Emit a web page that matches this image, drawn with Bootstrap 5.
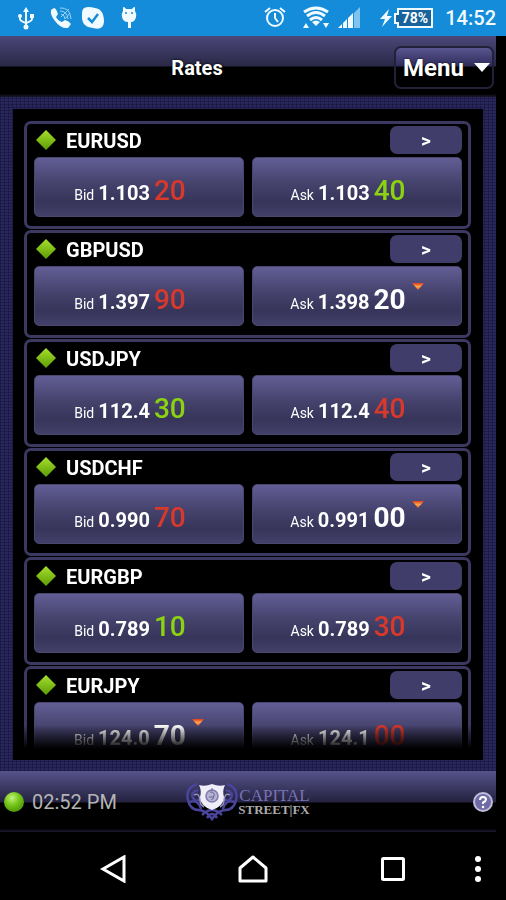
<!DOCTYPE html>
<html lang="en">
<head>
<meta charset="utf-8">
<meta name="viewport" content="width=device-width, initial-scale=1">
<title>Rates</title>
<link href="https://cdn.jsdelivr.net/npm/bootstrap@5.3.0/dist/css/bootstrap.min.css" rel="stylesheet">
<style>
body{background:#000;color:#fff;font-family:Roboto,"Liberation Sans",sans-serif;height:100vh;overflow:hidden}
svg{display:block;flex:none}
.status{background:#148cd9;height:36px;padding:0 10px 0 18px;color:#f1faff;font-size:20px;font-weight:500}
.battery-text{font:700 14px Roboto,sans-serif}
.app-shell{margin-right:10px;min-height:0}
.topbar{height:61px;padding:10px 2px 8px 0;background:linear-gradient(#4b4779 0,#2a2846 30px,#000 31px,#000 58px,#15141f 60px)}
.topbar h1{font-size:20px;font-weight:700;line-height:24px;text-shadow:0 0 3px #000}
.menu-btn{width:100px;border:2px solid #22213a;border-radius:7px;font-size:24px;font-weight:700;line-height:26px;color:#fff;padding:0 2px 0 7px;background:linear-gradient(#595590,#2f2c5c 18px,#000 19px);text-shadow:0 0 2px #000}
.woven{padding:12px 13px 11px;min-height:0;background:repeating-linear-gradient(0deg,#100e3666 0 1px,transparent 1px 3px),repeating-linear-gradient(90deg,#100e3666 0 1px,transparent 1px 4px),#29265a}
.well{background:#000;padding:12px 12px 11px 11px;min-height:0}
.rates{overflow:hidden;min-height:0;-webkit-mask-image:linear-gradient(#000 calc(100% - 24px),transparent);mask-image:linear-gradient(#000 calc(100% - 24px),transparent)}
.rate{border:3px solid #3b3862;border-radius:7px;height:108px;margin-bottom:1px;padding:2px 6px 0 7px;flex:none}
.rate h2{font-size:20px;font-weight:700;line-height:26px;padding:2px 0 0 10px}
.gem-icon{margin-left:2px}
.more-btn{width:72px;height:28px;border:0;border-radius:7px;background:#403d6b;color:#fff;font-size:19px;font-weight:700;line-height:30px;padding:0}
.quotes{margin-top:3px}
.price{height:60px;border:1px solid #494670;border-radius:5px;background:linear-gradient(#625e95,#44416b 45%,#38355b 75%,#423f69);color:#fff;padding:12px 0 0;white-space:nowrap}
.side{font-size:14px}
.base{font-size:20px;font-weight:700}
.pips{font-size:28px;font-weight:500;line-height:42px}
.up{color:#8bd211}.down{color:#d8392a}
.flat{font-weight:700}
.tick{width:12px;height:8px;margin-left:6px;align-self:flex-start;margin-top:3px}
.footbar{height:61px;display:grid;grid-template-columns:1fr auto 1fr;background:linear-gradient(#56528b 0,#24223f 31px,#000 32px,#000 58px,#16152a 60px)}
.clock{font-size:20px;color:#b4b4b4}
.brand{font-family:"Liberation Serif",serif;text-decoration:none}
.brand-top{font-size:17px;line-height:16px;color:#7772b4}
.brand-low{font-size:13px;line-height:12px;font-weight:700;color:#aaa}
.help-btn{border:0;background:none;padding:0 3px 0 0}
.sysnav{height:68px;display:grid;grid-template-columns:43px 1fr 1fr 1fr 29px;padding-right:14px;padding-top:6px}
.sysnav button{border:0;background:none;padding:0;display:flex;align-items:center;justify-content:center}
</style>
</head>
<body class="d-flex flex-column">
<svg width="0" height="0" class="position-absolute" aria-hidden="true">
<defs>
<linearGradient id="gem" x1="0" y1="0" x2="0" y2="1"><stop stop-color="#a6e02c"/><stop offset="1" stop-color="#5c9c06"/></linearGradient>
<radialGradient id="ball" cx=".4" cy=".3" r=".7"><stop stop-color="#c3f279"/><stop offset=".5" stop-color="#77c81b"/><stop offset="1" stop-color="#4d990a"/></radialGradient>
<linearGradient id="ember" x1="0" y1="0" x2="0" y2="1"><stop stop-color="#e03a1c"/><stop offset=".5" stop-color="#ffa44d"/><stop offset="1" stop-color="#e8561f"/></linearGradient>
<symbol id="diamond" viewBox="0 0 20 20"><path d="M10 0 20 10 10 20 0 10Z" fill="url(#gem)"/></symbol>
<symbol id="drop" viewBox="0 0 12 8"><path d="M0 1h12L6 8Z" fill="url(#ember)"/></symbol>
</defs>
</svg>

<div class="status d-flex align-items-center justify-content-between flex-shrink-0">
  <div class="d-flex align-items-center">
    <svg width="16" height="24" viewBox="0 0 16 24" fill="none" stroke="#f1faff" stroke-width="2"><path d="M8 4v17M2 9v4q0 2 6 4M14 9v4q0 2-6 4"/><g fill="#f1faff" stroke="none"><path d="m8 1 3 5H5Z"/><circle cx="8" cy="21" r="2.5"/><circle cx="2" cy="10" r="2"/><path d="M12 8h4v4h-4z"/></g></svg>
    <svg class="ms-3" width="23" height="24" viewBox="0 0 23 24" fill="#f1faff"><path d="m1 4 3-2q2 0 4 6l-2 3q2 4 6 5l3-2q4 1 6 4l-3 4Q11 23 5 15 0 9 1 4Z"/><path d="M10 2q10-1 11 11M10 5q7 0 8 8M11 8q4 1 4 5M11 11 19 3M15 13l5-6" fill="none" stroke="#9ad2f5" stroke-width="1"/></svg>
    <svg class="ms-2" width="24" height="24" viewBox="0 0 24 24"><path d="M7 1Q1 1 1 7v2q-1 12 11 13 10 3 11-6 0-13-9-14Q11 1 7 1Z" fill="#f1faff"/><path d="m7 12 4 4 6-8" fill="none" stroke="#148cd9" stroke-width="2.5"/></svg>
    <svg class="ms-3" width="16" height="24" viewBox="0 0 16 24"><path d="M2 1q2 0 3 2h6q1-2 3-2v4q2 3 1 6-1 5-5 5v6H7v-6q-5 0-6-5-1-3 1-6Z" fill="#f1faff"/><circle cx="5" cy="7" r="1" fill="#148cd9"/><circle cx="11" cy="7" r="1" fill="#148cd9"/></svg>
  </div>
  <div class="d-flex align-items-center">
    <svg width="22" height="24" viewBox="0 0 22 24" fill="none" stroke="#f1faff" stroke-width="2"><circle cx="11" cy="12" r="8"/><path d="M11 7v5l3 4M1 6l5-4M21 6l-5-4"/></svg>
    <svg class="ms-3" width="28" height="24" viewBox="0 0 28 24" fill="none" stroke="#f1faff" stroke-width="3"><path d="M2 6q12-8 24 0M5 10q9-7 18 0M8 14q6-5 12 0"/><path d="m14 20-4-4q4-3 8 0Z" fill="#f1faff" stroke="none"/><path d="m4 17 3 5H1zM24 22l-3-5h6z" fill="#f1faff" stroke="none"/></svg>
    <svg class="ms-2" width="22" height="24" viewBox="0 0 22 24"><path d="M16 7l6-6v21h-6z" fill="#7fc3ef"/><path d="M0 22l4-4v4zM5 17l4-4v9H5zM10 12l5-5v15h-5z" fill="#f1faff"/></svg>
    <svg class="ms-3 me-1" width="57" height="24" viewBox="0 0 57 24"><path d="M13 3 4 13h5l-3 8 10-11h-5z" fill="#f1faff"/><path d="M22 3h34v18H22v-4h-3V8h3z" fill="#17649c" stroke="#f1faff" stroke-width="2"/><text x="39" y="17" text-anchor="middle" fill="#fff" class="battery-text">78%</text></svg>
    <span class="ms-2">14:52</span>
  </div>
</div>

<div class="app-shell d-flex flex-column flex-fill">
  <header class="topbar d-flex align-items-center flex-shrink-0">
    <h1 class="m-0 flex-fill text-center">Rates</h1>
    <button class="menu-btn d-flex align-items-center justify-content-between align-self-stretch" type="button">Menu<svg width="16" height="9" viewBox="0 0 16 9"><path d="M0 0h16L8 9Z" fill="#fff"/></svg></button>
  </header>

  <main class="woven d-flex flex-column flex-fill">
    <div class="well d-flex flex-column flex-fill">
      <div class="rates d-flex flex-column flex-fill">
        <section class="rate">
          <div class="d-flex align-items-center"><svg width="20" height="20" class="gem-icon"><use href="#diamond"/></svg><h2 class="mb-0 flex-fill">EURUSD</h2><button class="more-btn" type="button">&gt;</button></div>
          <div class="quotes row g-0 gap-2 flex-nowrap">
            <div class="col"><button class="price w-100 d-flex justify-content-center align-items-baseline" type="button"><span class="side me-1">Bid</span><span class="base me-1">1.103</span><span class="pips down">20</span><span class="tick"></span></button></div>
            <div class="col"><button class="price w-100 d-flex justify-content-center align-items-baseline" type="button"><span class="side me-1">Ask</span><span class="base me-1">1.103</span><span class="pips up">40</span><span class="tick"></span></button></div>
          </div>
        </section>
        <section class="rate">
          <div class="d-flex align-items-center"><svg width="20" height="20" class="gem-icon"><use href="#diamond"/></svg><h2 class="mb-0 flex-fill">GBPUSD</h2><button class="more-btn" type="button">&gt;</button></div>
          <div class="quotes row g-0 gap-2 flex-nowrap">
            <div class="col"><button class="price w-100 d-flex justify-content-center align-items-baseline" type="button"><span class="side me-1">Bid</span><span class="base me-1">1.397</span><span class="pips down">90</span><span class="tick"></span></button></div>
            <div class="col"><button class="price w-100 d-flex justify-content-center align-items-baseline" type="button"><span class="side me-1">Ask</span><span class="base me-1">1.398</span><span class="pips flat">20</span><svg class="tick"><use href="#drop"/></svg></button></div>
          </div>
        </section>
        <section class="rate">
          <div class="d-flex align-items-center"><svg width="20" height="20" class="gem-icon"><use href="#diamond"/></svg><h2 class="mb-0 flex-fill">USDJPY</h2><button class="more-btn" type="button">&gt;</button></div>
          <div class="quotes row g-0 gap-2 flex-nowrap">
            <div class="col"><button class="price w-100 d-flex justify-content-center align-items-baseline" type="button"><span class="side me-1">Bid</span><span class="base me-1">112.4</span><span class="pips up">30</span><span class="tick"></span></button></div>
            <div class="col"><button class="price w-100 d-flex justify-content-center align-items-baseline" type="button"><span class="side me-1">Ask</span><span class="base me-1">112.4</span><span class="pips down">40</span><span class="tick"></span></button></div>
          </div>
        </section>
        <section class="rate">
          <div class="d-flex align-items-center"><svg width="20" height="20" class="gem-icon"><use href="#diamond"/></svg><h2 class="mb-0 flex-fill">USDCHF</h2><button class="more-btn" type="button">&gt;</button></div>
          <div class="quotes row g-0 gap-2 flex-nowrap">
            <div class="col"><button class="price w-100 d-flex justify-content-center align-items-baseline" type="button"><span class="side me-1">Bid</span><span class="base me-1">0.990</span><span class="pips down">70</span><span class="tick"></span></button></div>
            <div class="col"><button class="price w-100 d-flex justify-content-center align-items-baseline" type="button"><span class="side me-1">Ask</span><span class="base me-1">0.991</span><span class="pips flat">00</span><svg class="tick"><use href="#drop"/></svg></button></div>
          </div>
        </section>
        <section class="rate">
          <div class="d-flex align-items-center"><svg width="20" height="20" class="gem-icon"><use href="#diamond"/></svg><h2 class="mb-0 flex-fill">EURGBP</h2><button class="more-btn" type="button">&gt;</button></div>
          <div class="quotes row g-0 gap-2 flex-nowrap">
            <div class="col"><button class="price w-100 d-flex justify-content-center align-items-baseline" type="button"><span class="side me-1">Bid</span><span class="base me-1">0.789</span><span class="pips up">10</span><span class="tick"></span></button></div>
            <div class="col"><button class="price w-100 d-flex justify-content-center align-items-baseline" type="button"><span class="side me-1">Ask</span><span class="base me-1">0.789</span><span class="pips down">30</span><span class="tick"></span></button></div>
          </div>
        </section>
        <section class="rate">
          <div class="d-flex align-items-center"><svg width="20" height="20" class="gem-icon"><use href="#diamond"/></svg><h2 class="mb-0 flex-fill">EURJPY</h2><button class="more-btn" type="button">&gt;</button></div>
          <div class="quotes row g-0 gap-2 flex-nowrap">
            <div class="col"><button class="price w-100 d-flex justify-content-center align-items-baseline" type="button"><span class="side me-1">Bid</span><span class="base me-1">124.0</span><span class="pips flat">70</span><svg class="tick"><use href="#drop"/></svg></button></div>
            <div class="col"><button class="price w-100 d-flex justify-content-center align-items-baseline" type="button"><span class="side me-1">Ask</span><span class="base me-1">124.1</span><span class="pips down">00</span><span class="tick"></span></button></div>
          </div>
        </section>
      </div>
    </div>
  </main>

  <footer class="footbar align-items-center flex-shrink-0">
    <div class="d-flex align-items-center gap-2 ps-1"><svg width="20" height="20" viewBox="0 0 20 20"><circle cx="10" cy="10" r="10" fill="url(#ball)"/></svg><span class="clock">02:52 PM</span></div>
    <a class="brand d-flex align-items-center" href="#">
      <svg width="52" height="40" viewBox="0 0 52 40" fill="none">
        <g stroke="#4a459c" stroke-width="2.5"><path d="M11 2Q-1 6 2 18q2 10 11 10M41 2q12 4 9 16-2 10-11 10M12 8q-8 2-5 8 3 5 7 1M40 8q8 2 5 8-3 5-7 1M4 20q8-3 11 7M48 20q-8-3-11 7M12 28q8 0 14 9 6-9 14-9M16 33q5-5 10-5 5 0 10 5M21 36q5-8 10 0"/></g>
        <path d="M8 13q5-3 6 5 0 5 4 7M44 13q-5-3-6 5 0 5-4 7" stroke="#9692c4" stroke-width="1.5"/>
        <path d="M13 3q6 2 13-1 7 3 13 1-3 6-1 12 0 9-12 13Q14 24 14 15q2-6-1-12Z" fill="#eeedf8"/>
        <circle cx="26" cy="14" r="6" fill="#b5b2d2" stroke="#7e7aac" stroke-width="1.5"/><path d="M24 10q5 0 4 4t-3 4M23 15h5M26 6v3" stroke="#69659c"/>
      </svg>
      <span class="d-flex flex-column align-items-end"><span class="brand-top">CAPITAL</span><span class="brand-low">STREET|FX</span></span>
    </a>
    <button class="help-btn ms-auto" type="button" aria-label="Help"><svg width="20" height="20" viewBox="0 0 20 20"><circle cx="10" cy="10" r="9" fill="#6f6ba6" stroke="#c0bedb" stroke-width="2"/><path d="M7 8q0-3 3-3t3 2.500q0 1.500-3 3v1.500" fill="none" stroke="#fff" stroke-width="2"/><circle cx="10" cy="15" r="1.300" fill="#fff"/></svg></button>
  </footer>
</div>

<nav class="sysnav flex-shrink-0" aria-label="System">
  <span></span>
  <button type="button" aria-label="Back"><svg width="26" height="28" viewBox="0 0 26 28"><path d="M24 2v24L3 14Z" fill="none" stroke="#fff" stroke-width="3"/></svg></button>
  <button type="button" aria-label="Home"><svg width="30" height="28" viewBox="0 0 30 28"><path d="M2 26V13L15 2l13 11v13Z" fill="none" stroke="#fff" stroke-width="3" stroke-linejoin="round"/></svg></button>
  <button type="button" aria-label="Recent apps"><svg width="26" height="26" viewBox="0 0 26 26"><rect x="2.500" y="2.500" width="21" height="21" rx="1" fill="none" stroke="#fff" stroke-width="3"/></svg></button>
  <button type="button" aria-label="More"><svg width="8" height="28" viewBox="0 0 8 28" fill="#fff"><circle cx="4" cy="4" r="3"/><circle cx="4" cy="14" r="3"/><circle cx="4" cy="24" r="3"/></svg></button>
</nav>
<script src="https://cdn.jsdelivr.net/npm/bootstrap@5.3.0/dist/js/bootstrap.bundle.min.js"></script>
</body>
</html>
